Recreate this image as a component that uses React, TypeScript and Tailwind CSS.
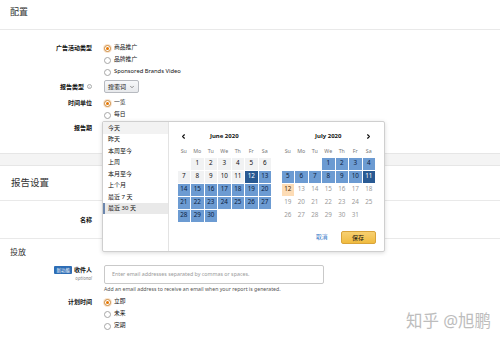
import React from "react";
import { ChevronLeft, ChevronRight, ChevronDown } from "lucide-react";

// ── helpers ───────────────────────────────────────────────────────────────
function Radio({ checked = false, label }: { checked?: boolean; label: string }) {
  return (
    <div className="h-[12px] flex items-center gap-[3px]">
      <span
        className={`w-[7px] h-[7px] rounded-full border flex items-center justify-center bg-white ${
          checked ? "border-[#c98a3c] shadow-[0_0_0_1px_rgba(228,121,17,0.2)]" : "border-[#a6a6a6]"
        }`}
      >
        {checked && <span className="w-[3px] h-[3px] rounded-full bg-[#e77600]" />}
      </span>
      <span className="text-[5.8px] leading-none text-[#111]">{label}</span>
    </div>
  );
}

function Label({ children, h = "h-[12px]" }: { children: React.ReactNode; h?: string }) {
  return (
    <div className={`w-[92px] shrink-0 flex items-center justify-end font-bold text-[6px] leading-none text-[#111] ${h}`}>
      {children}
    </div>
  );
}

type CellKind = "none" | "light" | "mid" | "dark" | "today" | "muted";

function Cell({ day, kind }: { day?: number; kind: CellKind }) {
  const styles: Record<CellKind, string> = {
    none: "",
    light: "bg-[#f1f2f3] text-[#111]",
    mid: "bg-[#6c9bd2] text-[#0c2240]",
    dark: "bg-[#295a93] text-white",
    today: "bg-[#fddcb5] text-[#4a2a08]",
    muted: "text-[#9a9a9a]",
  };
  return (
    <div className="w-[13.5px] h-[13px] p-[0.5px]">
      <div className={`w-full h-full flex items-center justify-center text-[6.3px] leading-none ${styles[kind]}`}>
        {day ?? ""}
      </div>
    </div>
  );
}

const WEEK = ["Su", "Mo", "Tu", "We", "Th", "Fr", "Sa"];

function Month({
  title,
  offset,
  days,
  kindOf,
  nav,
}: {
  title: string;
  offset: number;
  days: number;
  kindOf: (d: number) => CellKind;
  nav: "left" | "right";
}) {
  const cells: { day?: number; kind: CellKind }[] = [];
  for (let i = 0; i < offset; i++) cells.push({ kind: "none" });
  for (let d = 1; d <= days; d++) cells.push({ day: d, kind: kindOf(d) });

  return (
    <div className="w-[94.5px]">
      <div className="h-[14px] flex items-center">
        <div className="w-[13.5px] flex justify-center">
          {nav === "left" && <ChevronLeft size={7} strokeWidth={4} className="text-[#111]" />}
        </div>
        <div className="flex-1 text-center font-bold text-[6px] leading-none text-[#111]">{title}</div>
        <div className="w-[13.5px] flex justify-center">
          {nav === "right" && <ChevronRight size={7} strokeWidth={4} className="text-[#111]" />}
        </div>
      </div>
      <div className="mt-[4px] h-[10px] grid grid-cols-[repeat(7,13.5px)] items-center">
        {WEEK.map((w) => (
          <div key={w} className="text-center text-[5.3px] leading-none text-[#767676]">
            {w}
          </div>
        ))}
      </div>
      <div className="grid grid-cols-[repeat(7,13.5px)]">
        {cells.map((c, i) => (
          <Cell key={i} day={c.day} kind={c.kind} />
        ))}
      </div>
    </div>
  );
}

const PRESETS = ["今天", "昨天", "本周至今", "上周", "本月至今", "上个月", "最近 7 天", "最近 30 天"];

export default function App() {
  return (
    <div className="relative w-[500px] h-[337px] overflow-hidden bg-white text-[#111] font-['Noto_Sans','Noto_Sans_CJK_SC',sans-serif]">
      {/* 配置 */}
      <div className="h-[30px] border-b border-[#e9e9e9] pl-[10px] pb-[6px] flex items-center text-[9px] text-[#333]">配置</div>

      <div className="pt-[12px]">
        <div className="flex">
          <Label>广告活动类型</Label>
          <div className="ml-[12px] flex flex-col">
            <Radio checked label="商品推广" />
            <Radio label="品牌推广" />
            <Radio label="Sponsored Brands Video" />
          </div>
        </div>

        <div className="flex mt-[2px]">
          <Label h="h-[13px]">
            报告类型
            <span className="ml-[3px] w-[5px] h-[5px] rounded-full border border-[#aaa] text-[3.5px] text-[#888] flex items-center justify-center font-normal">
              i
            </span>
          </Label>
          <div className="ml-[12px] h-[13px] w-[35px] rounded-[2px] border border-[#b7bac0] bg-gradient-to-b from-[#f7f8fa] to-[#e7e9ec] flex items-center justify-center gap-[3px] text-[6px] leading-none">
            搜索词
            <ChevronDown size={6} strokeWidth={2.5} className="text-[#555]" />
          </div>
        </div>

        <div className="flex mt-[4px]">
          <Label>时间单位</Label>
          <div className="ml-[12px] flex flex-col">
            <Radio checked label="一览" />
            <Radio label="每日" />
          </div>
        </div>

        <div className="flex mt-[1px]">
          <Label>报告期</Label>
        </div>
      </div>

      <div className="mt-[19px] h-[13px] bg-[#f4f4f4] border-y border-[#e6e6e6]" />

      {/* 报告设置 */}
      <div className="h-[35px] border-b border-[#e9e9e9] pl-[11px] flex items-center text-[9.5px] text-[#333]">报告设置</div>

      <div className="flex mt-[12px]">
        <Label h="h-[13px]">名称</Label>
      </div>
      <div className="h-[13px] border-b border-[#e9e9e9]" />

      {/* 投放 */}
      <div className="h-[26px] pl-[10px] flex items-center text-[8px] text-[#333]">投放</div>

      <div className="flex">
        <div className="w-[92px] shrink-0 flex flex-col items-end pt-[1px]">
          <div className="h-[8px] flex items-center gap-[2px]">
            <span className="bg-[#2d6db5] text-white text-[4.5px] leading-none px-[2px] py-[1.5px] rounded-[1px]">新功能</span>
            <span className="font-bold text-[6px] leading-none">收件人</span>
          </div>
          <div className="mt-[2px] text-[4.5px] leading-none text-[#888] italic">optional</div>
        </div>
        <div className="ml-[12px] w-[220px] h-[19px] border border-[#c9c9c9] rounded-[2px] flex items-center pl-[7px] text-[5.3px] text-[#999]">
          Enter email addresses separated by commas or spaces.
        </div>
      </div>
      <div className="ml-[104px] h-[12px] flex items-center text-[5.2px] text-[#555]">
        Add an email address to receive an email when your report is generated.
      </div>

      <div className="flex">
        <Label>计划时间</Label>
        <div className="ml-[12px] flex flex-col">
          <Radio checked label="立即" />
          <Radio label="未来" />
          <Radio label="定期" />
        </div>
      </div>

      {/* Date range popover */}
      <div className="absolute left-[102px] top-[121px] w-[283px] h-[131px] flex bg-white border border-[#cfcfcf] rounded-[2px] shadow-[0_1px_4px_rgba(0,0,0,0.15)]">
        <div className="w-[66px] border-r border-[#e3e3e3] flex flex-col">
          {PRESETS.map((p, i) => (
            <div
              key={p}
              className={`h-[11.5px] flex items-center text-[6px] leading-none ${
                i === 0
                  ? "bg-[#f2f2f2] pl-[5px]"
                  : i === PRESETS.length - 1
                  ? "bg-[#e9e9e9] border-l-2 border-[#6b86ad] pl-[3px]"
                  : "pl-[5px]"
              }`}
            >
              {p}
            </div>
          ))}
        </div>

        <div className="flex-1 pl-[8px] pt-[7px] flex flex-col">
          <div className="flex gap-[9.5px]">
            <Month
              title="June 2020"
              offset={1}
              days={30}
              nav="left"
              kindOf={(d) => (d < 12 ? "light" : d === 12 ? "dark" : "mid")}
            />
            <Month
              title="July 2020"
              offset={3}
              days={31}
              nav="right"
              kindOf={(d) => (d < 11 ? "mid" : d === 11 ? "dark" : d === 12 ? "today" : "muted")}
            />
          </div>
          <div className="mt-[9px] w-[198.5px] h-[13px] flex items-center justify-end">
            <span className="mr-[13px] text-[5.8px] text-[#3a7bc8]">取消</span>
            <div className="w-[35px] h-[13px] rounded-[2px] border border-[#d9a43a] bg-gradient-to-b from-[#f7d070] to-[#f0bb3e] flex items-center justify-center text-[6px] leading-none text-[#111]">
              保存
            </div>
          </div>
        </div>
      </div>

      {/* watermark */}
      <div className="absolute left-[406px] top-[313px] text-[16.5px] leading-none text-[#bdbdbd]">知乎 @旭鹏</div>
    </div>
  );
}
